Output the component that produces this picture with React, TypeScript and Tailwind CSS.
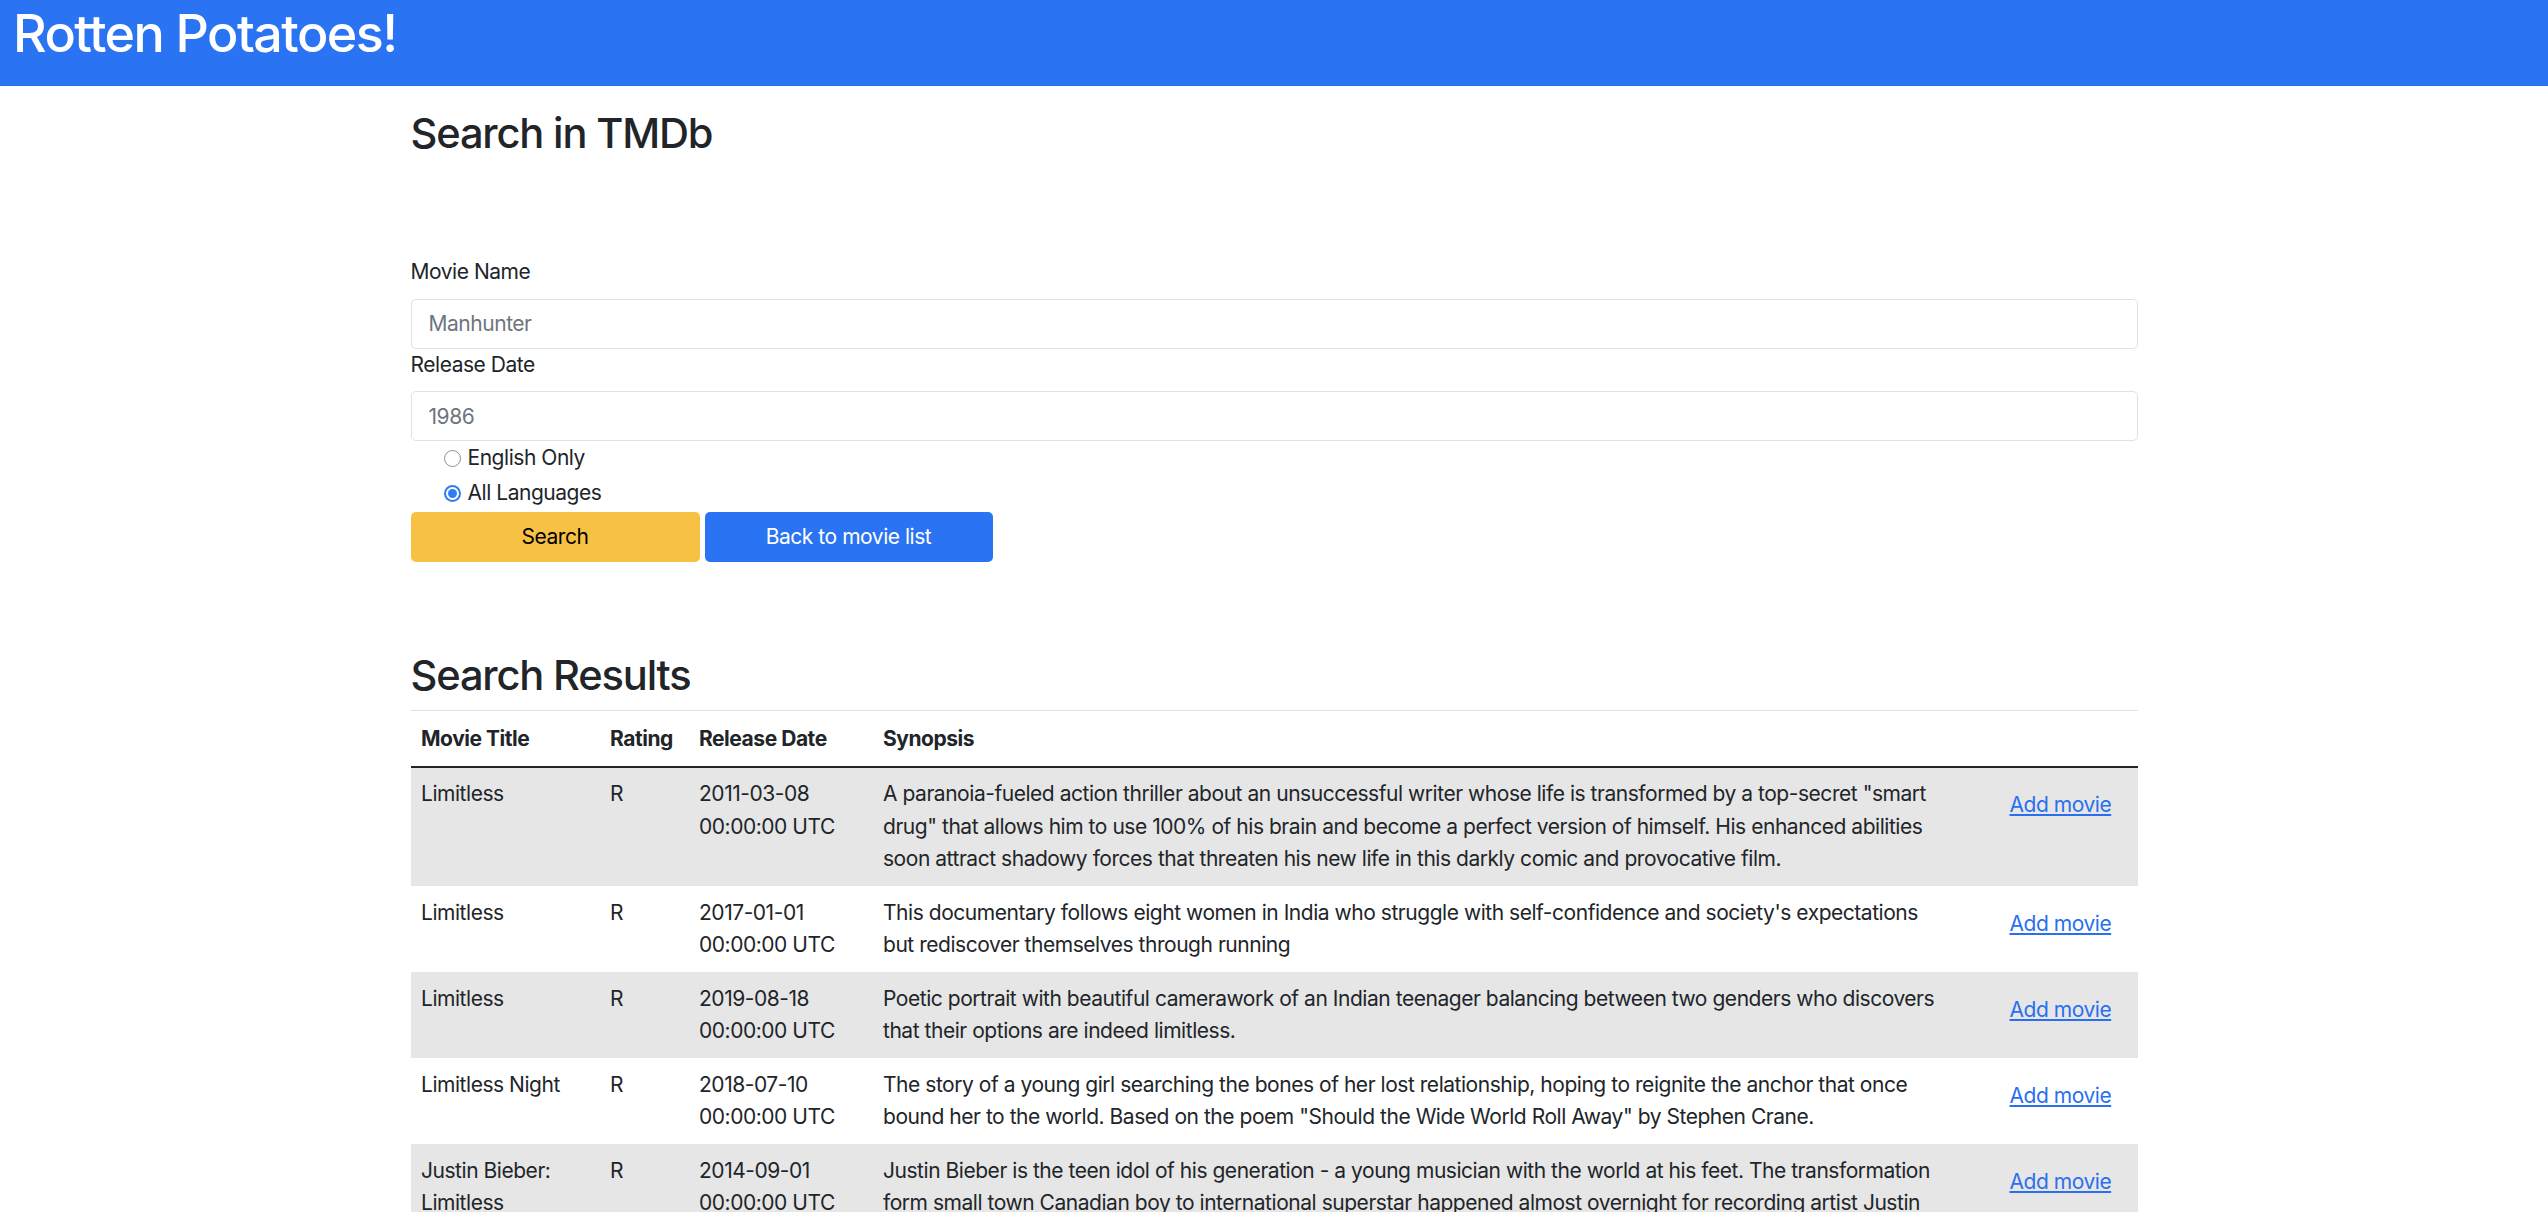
import React from "react";

interface MovieResult {
  title: string;
  rating: string;
  date: string;
  synopsis: string[];
}

// synopsis lines are kept as the page shows them wrapped
const results: MovieResult[] = [
  {
    title: "Limitless",
    rating: "R",
    date: "2011-03-08 00:00:00 UTC",
    synopsis: [
      'A paranoia-fueled action thriller about an unsuccessful writer whose life is transformed by a top-secret "smart',
      'drug" that allows him to use 100% of his brain and become a perfect version of himself. His enhanced abilities',
      "soon attract shadowy forces that threaten his new life in this darkly comic and provocative film.",
    ],
  },
  {
    title: "Limitless",
    rating: "R",
    date: "2017-01-01 00:00:00 UTC",
    synopsis: [
      "This documentary follows eight women in India who struggle with self-confidence and society's expectations",
      "but rediscover themselves through running",
    ],
  },
  {
    title: "Limitless",
    rating: "R",
    date: "2019-08-18 00:00:00 UTC",
    synopsis: [
      "Poetic portrait with beautiful camerawork of an Indian teenager balancing between two genders who discovers",
      "that their options are indeed limitless.",
    ],
  },
  {
    title: "Limitless Night",
    rating: "R",
    date: "2018-07-10 00:00:00 UTC",
    synopsis: [
      "The story of a young girl searching the bones of her lost relationship, hoping to reignite the anchor that once",
      'bound her to the world. Based on the poem "Should the Wide World Roll Away" by Stephen Crane.',
    ],
  },
  {
    title: "Justin Bieber: Limitless",
    rating: "R",
    date: "2014-09-01 00:00:00 UTC",
    synopsis: [
      "Justin Bieber is the teen idol of his generation - a young musician with the world at his feet. The transformation",
      "form small town Canadian boy to international superstar happened almost overnight for recording artist Justin",
      "Bieber.",
    ],
  },
];

function Radio({ label, checked }: { label: string; checked?: boolean }) {
  return (
    <label className="flex h-[32.5px] items-center pl-[33px] mb-[2.5px]">
      {checked ? (
        <span className="flex h-[17px] w-[17px] items-center justify-center rounded-full bg-[#2f7cf6]">
          <span className="h-[13px] w-[13px] rounded-full bg-white flex items-center justify-center">
            <span className="h-[9px] w-[9px] rounded-full bg-[#2f7cf6]" />
          </span>
        </span>
      ) : (
        <span className="h-[17px] w-[17px] rounded-full border-[1.5px] border-[#8e8e93] bg-white" />
      )}
      <span className="ml-[7px]">{label}</span>
    </label>
  );
}

export default function App() {
  return (
    <div className="min-h-screen bg-white text-[21px] leading-[32.5px] tracking-[-0.022em] text-[#212529] font-['Inter','Liberation_Sans',sans-serif]">
      {/* Header */}
      <header className="h-[86px] bg-[#2a73f2] pl-[13px] pt-[3px]">
        <h1 className="text-[52px] leading-[62px] font-medium tracking-[-0.03em] text-white">Rotten Potatoes!</h1>
      </header>

      <main className="mx-auto w-[1727px]">
        <h2 className="mt-[22px] text-[41.6px] leading-[50px] font-medium tracking-[-0.028em]">Search in TMDb</h2>

        {/* Search form */}
        <form className="mt-[98px]">
          <label className="block mb-[10px]">Movie Name</label>
          <input
            className="block h-[50px] w-full rounded-[5px] border border-[#dee2e6] px-[17px] placeholder:text-[#6c757d] outline-none"
            placeholder="Manhunter"
          />
          <label className="block mb-[10px]">Release Date</label>
          <input
            className="block h-[50px] w-full rounded-[5px] border border-[#dee2e6] px-[17px] placeholder:text-[#6c757d] outline-none"
            placeholder="1986"
          />
          <div className="pt-[1px]">
            <Radio label="English Only" />
            <Radio label="All Languages" checked />
          </div>
          <div className="flex gap-[5px]">
            <button type="button" className="h-[50px] w-[289px] rounded-[5px] bg-[#f7c244] text-black">
              Search
            </button>
            <button type="button" className="h-[50px] w-[288px] rounded-[5px] bg-[#2a73f2] text-white">
              Back to movie list
            </button>
          </div>
        </form>

        {/* Results */}
        <h2 className="mt-[88px] mb-[10px] text-[41.6px] leading-[50px] font-medium tracking-[-0.028em]">Search Results</h2>
        <table className="w-full table-fixed border-collapse border-t border-[#dee2e6] text-left">
          <colgroup>
            <col className="w-[189px]" />
            <col className="w-[89px]" />
            <col className="w-[184px]" />
            <col className="w-[1111px]" />
            <col className="w-[154px]" />
          </colgroup>
          <thead>
            <tr className="border-b-2 border-[#212529]">
              <th className="px-[10.5px] pt-[11.5px] pb-[10.5px] font-bold">Movie Title</th>
              <th className="px-[10.5px] pt-[11.5px] pb-[10.5px] font-bold">Rating</th>
              <th className="px-[10.5px] pt-[11.5px] pb-[10.5px] font-bold">Release Date</th>
              <th className="px-[10.5px] pt-[11.5px] pb-[10.5px] font-bold">Synopsis</th>
              <th className="px-[10.5px] pt-[11.5px] pb-[10.5px]" />
            </tr>
          </thead>
          <tbody>
            {results.map((m, i) => (
              <tr key={i} className={i % 2 === 0 ? "bg-[#e6e6e6]" : "bg-white"}>
                <td className="p-[10.5px] align-top">{m.title}</td>
                <td className="p-[10.5px] align-top">{m.rating}</td>
                <td className="p-[10.5px] align-top">{m.date}</td>
                <td className="p-[10.5px] align-top">
                  {m.synopsis.map((line, j) => (
                    <span key={j} className="block whitespace-nowrap">
                      {line}
                    </span>
                  ))}
                </td>
                <td className="p-[10.5px] align-top">
                  <a href="#" className="block py-[11px] pl-[15.5px] text-[#2a6ff0] underline">
                    Add movie
                  </a>
                </td>
              </tr>
            ))}
          </tbody>
        </table>
      </main>
    </div>
  );
}
